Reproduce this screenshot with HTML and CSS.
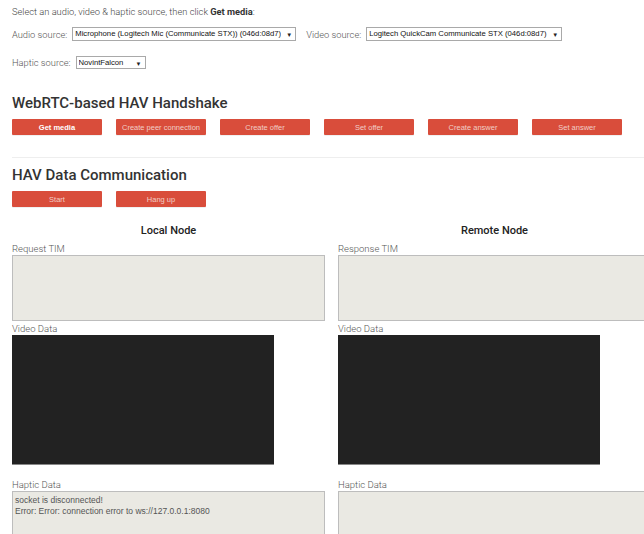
FILE: index.html
```html
<!DOCTYPE html>
<html lang="en">
<head>
<meta charset="utf-8">
<title>HAV Handshake</title>
<link rel="stylesheet" href="styles.css">
</head>
<body>
<div class="page">
  <p class="intro">Select an audio, video &amp; haptic source, then click <strong>Get media</strong>:</p>

  <div class="source-row">
    <label class="source">Audio source:
      <span class="picker"><select class="pick"><option>Microphone (Logitech Mic (Communicate STX)) (046d:08d7)</option></select></span>
    </label>
    <label class="source">Video source:
      <span class="picker"><select class="pick"><option>Logitech QuickCam Communicate STX (046d:08d7)</option></select></span>
    </label>
  </div>
  <div class="source-row second">
    <label class="source">Haptic source:
      <span class="picker"><select class="pick short"><option>NovintFalcon</option></select></span>
    </label>
  </div>

  <h2 class="section-title first">WebRTC-based HAV Handshake</h2>
  <div class="btn-row">
    <button class="btn primary">Get media</button>
    <button class="btn">Create peer connection</button>
    <button class="btn">Create offer</button>
    <button class="btn">Set offer</button>
    <button class="btn">Create answer</button>
    <button class="btn">Set answer</button>
  </div>

  <hr class="divider">

  <h2 class="section-title">HAV Data Communication</h2>
  <div class="btn-row">
    <button class="btn">Start</button>
    <button class="btn">Hang up</button>
  </div>

  <div class="nodes">
    <section class="node">
      <h3 class="node-title">Local Node</h3>
      <div class="field-label">Request TIM</div>
      <textarea class="data-box"></textarea>
      <div class="field-label after-box">Video Data</div>
      <div class="video"></div>
      <div class="field-label haptic">Haptic Data</div>
      <textarea class="data-box log">socket is disconnected!
Error: Error: connection error to ws://127.0.0.1:8080</textarea>
    </section>
    <section class="node">
      <h3 class="node-title">Remote Node</h3>
      <div class="field-label">Response TIM</div>
      <textarea class="data-box"></textarea>
      <div class="field-label after-box">Video Data</div>
      <div class="video"></div>
      <div class="field-label haptic">Haptic Data</div>
      <textarea class="data-box log"></textarea>
    </section>
  </div>
</div>
</body>
</html>
```

FILE: styles.css
```css
html, body {
  margin: 0;
  padding: 0;
  background: #fff;
}

body {
  font-family: Roboto, "Liberation Sans", Arial, sans-serif;
  color: #555;
  overflow: hidden;
}

.page {
  padding-left: 12px;
  width: 700px;
}

.intro {
  margin: 4px 0 0;
  height: 16px;
  line-height: 16px;
  font-size: 9.3px;
  font-weight: 300;
  color: #444;
}

.intro strong {
  font-weight: 700;
  color: #333;
}

.source-row {
  display: flex;
  gap: 10px;
  margin-top: 7px;
  height: 14px;
  align-items: center;
}

.source-row.second {
  margin-top: 15px;
  height: 13px;
}

.source {
  display: flex;
  align-items: center;
  gap: 5px;
  font-size: 9.3px;
  font-weight: 300;
  color: #555;
}

.picker {
  position: relative;
  display: inline-flex;
}

.picker::after {
  content: "\25BC";
  position: absolute;
  right: 4px;
  top: 50%;
  transform: translateY(-50%);
  font-family: "DejaVu Sans", sans-serif;
  font-size: 6px;
  color: #222;
  pointer-events: none;
}

.pick {
  appearance: none;
  -webkit-appearance: none;
  margin: 0;
  height: 14px;
  padding: 0 14px 0 2px;
  border: 1px solid #a9a9a9;
  border-radius: 0;
  background: #fff;
  font-family: "Liberation Sans", Arial, sans-serif;
  font-size: 7.7px;
  color: #111;
  line-height: 12px;
}

.pick.short {
  height: 13px;
  width: 70px;
}

.section-title {
  margin: 0;
  height: 20px;
  line-height: 20px;
  font-size: 15px;
  font-weight: 500;
  color: #333;
}

.section-title.first {
  margin-top: 24px;
}

.btn-row {
  display: flex;
  gap: 14px;
  margin-top: 6px;
}

.btn {
  width: 90px;
  height: 16px;
  margin: 0;
  padding: 0;
  border: none;
  border-radius: 1px;
  background: #d94d3b;
  box-shadow: 0 1px 0 rgba(0, 0, 0, 0.06);
  font-family: "Liberation Sans", Arial, sans-serif;
  font-size: 7.5px;
  color: #f1cdc6;
  cursor: pointer;
}

.btn.primary {
  font-weight: 700;
  color: #fff;
}

.divider {
  margin: 22px 0 0;
  border: none;
  border-top: 1px solid #eee;
  height: 0;
}

.divider + .section-title {
  margin-top: 7px;
}

.nodes {
  display: grid;
  grid-template-columns: 313px 313px;
  column-gap: 13px;
  margin-top: 16px;
}

.node {
  display: flex;
  flex-direction: column;
}

.node-title {
  margin: 0;
  height: 16px;
  line-height: 16px;
  text-align: center;
  font-size: 11px;
  font-weight: 500;
  color: #222;
}

.field-label {
  height: 13px;
  line-height: 13px;
  margin-top: 3px;
  font-size: 9.5px;
  font-weight: 300;
  color: #555;
}

.field-label.after-box {
  margin-top: 1px;
}

.field-label.haptic {
  margin-top: 13px;
}

.data-box {
  display: block;
  box-sizing: border-box;
  width: 313px;
  height: 66px;
  margin: 0;
  padding: 3px 2px;
  border: 1px solid #bdbdbd;
  background: #eae9e3;
  resize: none;
  font-family: "Liberation Sans", Arial, sans-serif;
  font-size: 8.5px;
  line-height: 11px;
  color: #555;
}

.video {
  width: 262px;
  height: 130px;
  background: #222;
  border-bottom: 1px solid #888;
  box-sizing: border-box;
}
```
